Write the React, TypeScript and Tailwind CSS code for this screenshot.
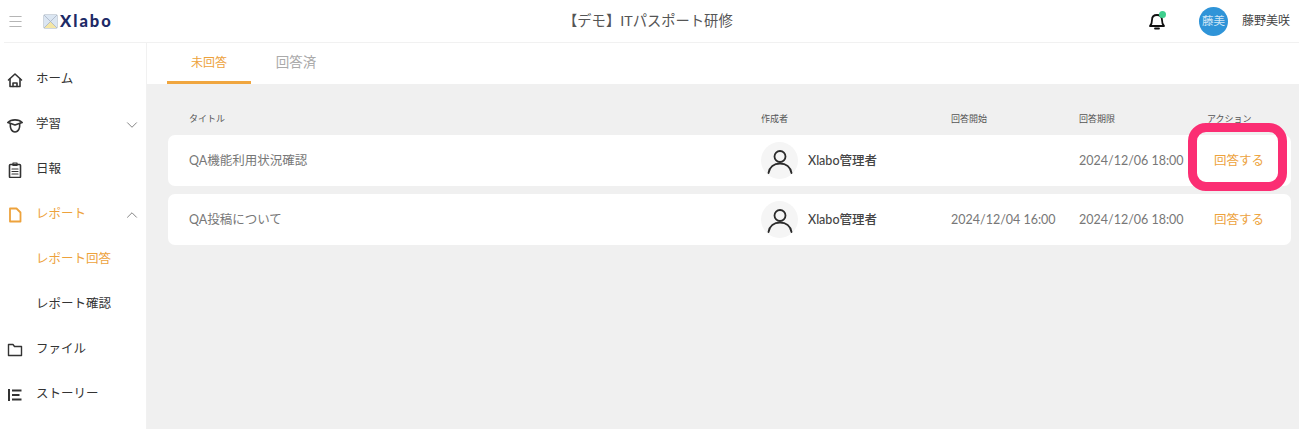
import React from "react";
import { ChevronDown, ChevronUp, Menu } from "lucide-react";

const font = "font-['Lato','Noto_Sans_CJK_JP',sans-serif]";

function Ic({ children, className = "text-[#333]" }: { children: React.ReactNode; className?: string }) {
  return (
    <svg width="16" height="16" viewBox="0 0 16 16" fill="none" stroke="currentColor" strokeWidth="1.6" strokeLinejoin="round" strokeLinecap="round" className={className}>
      {children}
    </svg>
  );
}

const HomeI = () => (
  <Ic>
    <path d="M1.500 8 8 2l6.500 6" />
    <path d="M3 7v7.500h10V7" />
    <path d="M6 14.500v-3.500h4v3.500" />
  </Ic>
);
const CapI = () => (
  <Ic>
    <path d="M1 5.500C4 2 12 2 15 5.500" />
    <path d="M1 5.500 8 8l7-2.500" />
    <path d="M3.300 6.500c-.3 4.500 1 8.500 4.700 8.500s5-4 4.700-8.500" />
  </Ic>
);
const ClipI = () => (
  <Ic>
    <rect x="2.500" y="2.500" width="11" height="13" rx="1" />
    <path d="M6 1h4v2.500H6zM5 7h6M5 9.500h6M5 12h6" strokeWidth="1.200" />
  </Ic>
);
const FileI = () => (
  <Ic className="text-[#eda23c]">
    <path d="M3 1.500h6.500L13.500 5.500V14.500H3z" strokeWidth="1.800" />
  </Ic>
);
const FolderI = () => (
  <Ic>
    <path d="M1.500 2.500h4.500l1.500 2h7v9h-13z" strokeWidth="1.400" />
  </Ic>
);
const StoryI = () => (
  <Ic>
    <path d="M2 2v12" strokeWidth="2" strokeLinecap="butt" />
    <path d="M5 3.500h9.500M5 8h7.500M5 12.500h9.500" strokeWidth="1.800" strokeLinecap="butt" />
  </Ic>
);

function NavItem({ icon, label, active, chevron }: { icon?: React.ReactNode; label: string; active?: boolean; chevron?: "up" | "down" }) {
  return (
    <div className="h-[45px] flex items-center pl-[7px] pr-[5px]">
      <span className="w-[16px] h-[16px] flex items-center justify-center">{icon}</span>
      <span className={`ml-[13px] flex-1 text-[12.500px] ${active ? "text-[#eda23c]" : "text-[#333]"}`}>{label}</span>
      {chevron === "down" && <ChevronDown size={18} strokeWidth={1.200} className="text-[#777]" />}
      {chevron === "up" && <ChevronUp size={18} strokeWidth={1.200} className="text-[#777]" />}
    </div>
  );
}

function Person() {
  return (
    <div className="w-[37px] h-[37px] rounded-full bg-[#f5f5f5] flex items-center justify-center shrink-0">
      <svg width="28" height="28" viewBox="0 0 28 28" fill="none" stroke="#2b2b2b" strokeWidth="1.800" strokeLinecap="round">
        <circle cx="14" cy="9.500" r="5.500" />
        <path d="M2.500 26c1-6 5.500-9.500 11.500-9.500S24.500 20 25.500 26" />
      </svg>
    </div>
  );
}

const cols = "grid grid-cols-[572px_190px_128px_128px_1fr]";

function Row({ title, start, end }: { title: string; start: string; end: string }) {
  return (
    <div className={`${cols} items-center h-[51px] bg-white rounded-[7px] pl-[21px] text-[12.500px] text-[#777]`}>
      <span className="pt-[2px]">{title}</span>
      <div className="flex items-center gap-[10px]">
        <Person />
        <span className="pt-[2px] text-[#444] font-medium">Xlabo管理者</span>
      </div>
      <span className="pt-[2px]">{start}</span>
      <span className="pt-[2px]">{end}</span>
      <span className="pt-[2px] pl-[7px] text-[#eda23c]">回答する</span>
    </div>
  );
}

export default function App() {
  return (
    <div className={`${font} relative w-[1299px] h-[429px] overflow-hidden bg-white flex flex-col`}>
      <header className="h-[43px] shrink-0 flex items-center relative border-b border-[#f1f1f1] ml-[4px]">
        <Menu size={17} strokeWidth={1.500} className="text-[#b5b5b5] ml-[3px]" />
        <svg width="15" height="15" viewBox="0 0 15 15" className="ml-[19px]">
          <rect x="0.500" y="0.500" width="14" height="14" rx="1.500" fill="#dbe6f2" stroke="#cfd6de" />
          <path d="M1 14 7.500 7.500 14 14z" fill="#f4e6a6" />
          <path d="M1 1l13 13M14 1 1 14" stroke="#a9b4c4" strokeWidth="0.800" />
        </svg>
        <span className="ml-[2px] text-[16.500px] font-black tracking-[2px] text-[#1d2a66]">Xlabo</span>
        <span className="absolute left-[559px] text-[14.300px] text-[#555]">【デモ】ITパスポート研修</span>
        <div className="ml-auto flex items-center mr-[9px]">
          <div className="relative w-[18px] h-[18px] mr-[33px]">
            <svg width="18" height="18" viewBox="0 0 18 18" fill="none" stroke="#111" strokeWidth="1.800" strokeLinecap="round" strokeLinejoin="round">
              <path d="M2 14h14c-1.500-1.500-2-3-2-6s-2-5-5-5-5 2-5 5-.5 4.500-2 6z" />
              <path d="M7 16.500h4" />
            </svg>
            <span className="absolute -top-[1px] right-0 w-[7px] h-[7px] rounded-full bg-[#3fcf8e]" />
          </div>
          <div className="w-[29px] h-[29px] rounded-full bg-[#2f94d8] text-[#cfe6f6] text-[11.500px] flex items-center justify-center">藤美</div>
          <span className="ml-[14px] text-[12px] text-[#444]">藤野美咲</span>
        </div>
      </header>
      <div className="flex flex-1 min-h-0">
        <aside className="w-[147px] shrink-0 border-r border-[#f1f1f1] pt-[14px]">
          <NavItem icon={<HomeI />} label="ホーム" />
          <NavItem icon={<CapI />} label="学習" chevron="down" />
          <NavItem icon={<ClipI />} label="日報" />
          <NavItem icon={<FileI />} label="レポート" active chevron="up" />
          <NavItem label="レポート回答" active />
          <NavItem label="レポート確認" />
          <NavItem icon={<FolderI />} label="ファイル" />
          <NavItem icon={<StoryI />} label="ストーリー" />
        </aside>
        <main className="flex-1 flex flex-col bg-[#f0f0f0]">
          <div className="h-[41px] shrink-0 bg-white flex pl-[20px]">
            <div className="w-[84px] h-[41px] border-b-[3px] border-[#f0a63f] flex items-center justify-center pt-[1px] text-[12px] text-[#eda23c]">未回答</div>
            <div className="w-[90px] h-[41px] flex items-center justify-center pb-[2px] text-[13.500px] text-[#aaa]">回答済</div>
          </div>
          <div className="pl-[21px] pr-[8px] pt-[27px] flex flex-col gap-[8px]">
            <div className={`${cols} pl-[21px] h-[16px] items-center text-[9px] text-[#555]`}>
              <span>タイトル</span>
              <span>作成者</span>
              <span>回答開始</span>
              <span>回答期限</span>
              <span>アクション</span>
            </div>
            <Row title="QA機能利用状況確認" start="" end="2024/12/06 18:00" />
            <Row title="QA投稿について" start="2024/12/04 16:00" end="2024/12/06 18:00" />
          </div>
        </main>
      </div>
      <div className="absolute left-[1188px] top-[123px] w-[99px] h-[68px] rounded-[18px] border-[9px] border-[#fb2e73]" />
    </div>
  );
}
